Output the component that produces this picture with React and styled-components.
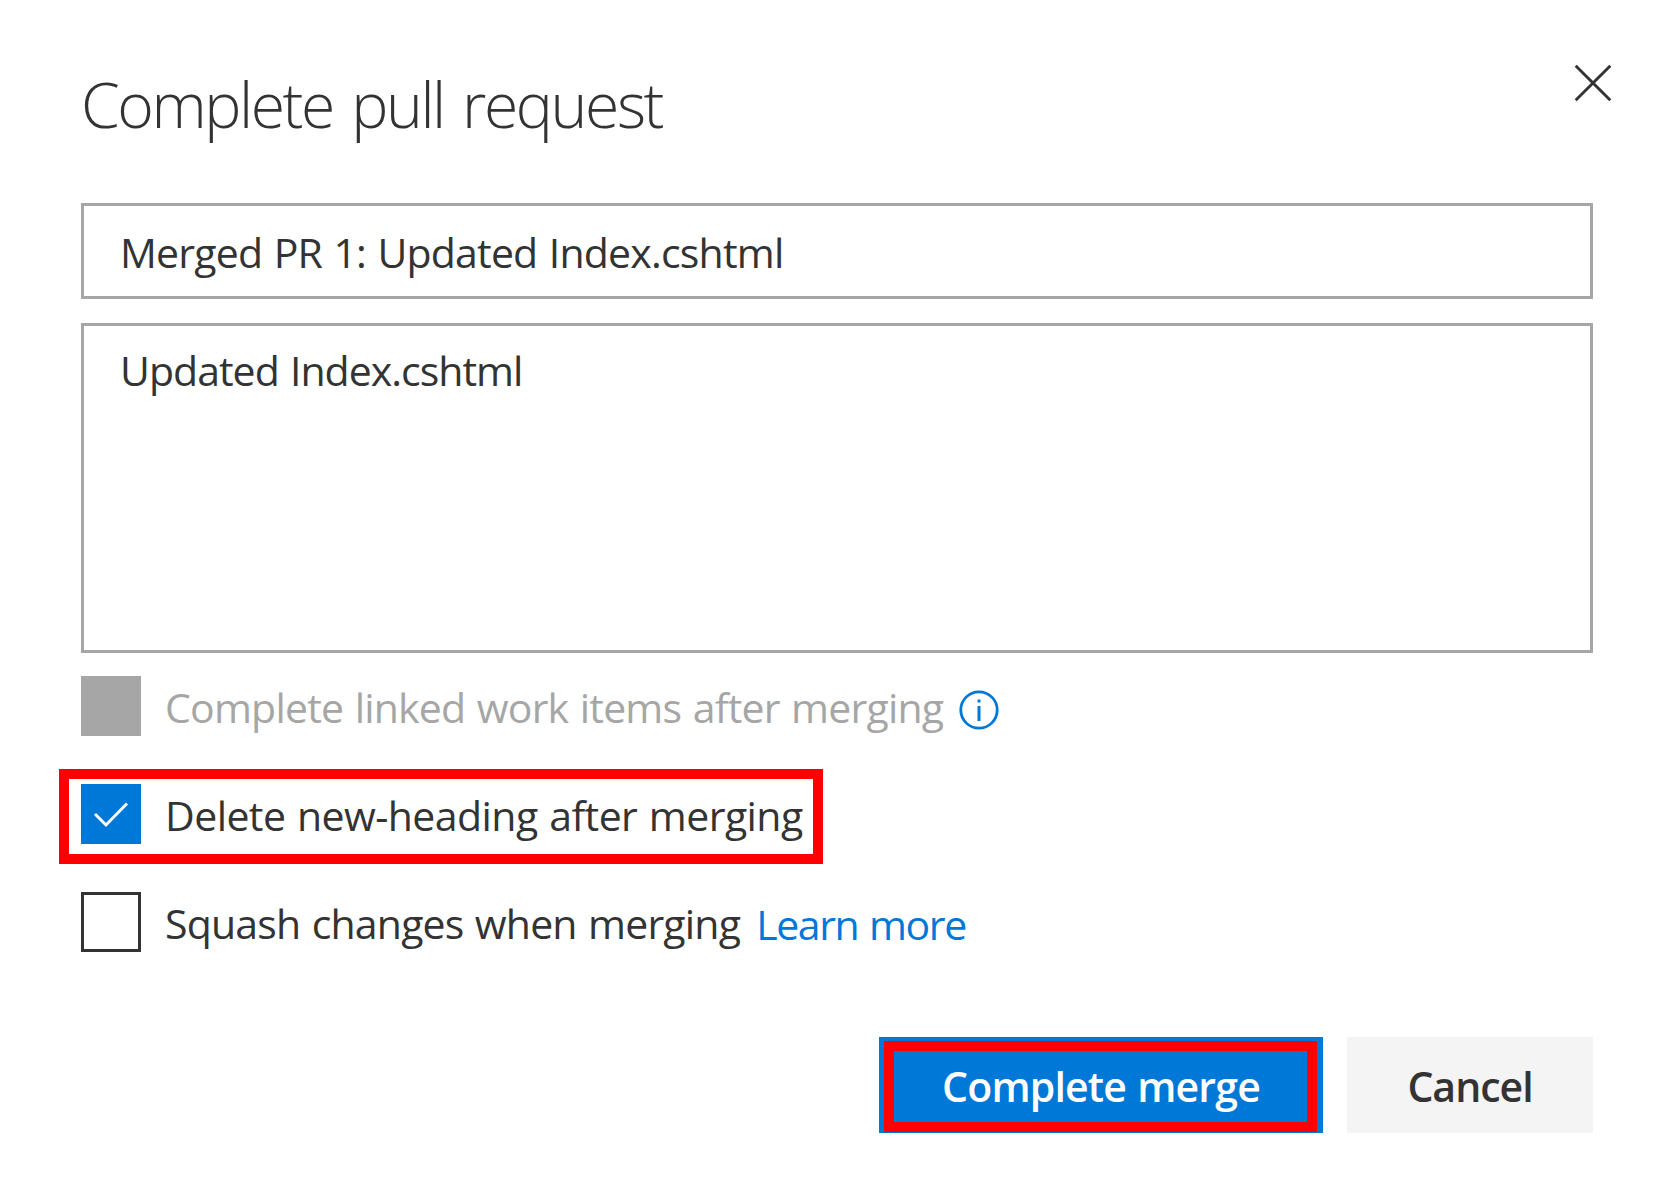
import React from 'react';
import styled, { createGlobalStyle } from 'styled-components';

const GlobalStyle = createGlobalStyle`
  body {
    margin: 0;
    background: #fff;
  }
  *, *::before, *::after {
    box-sizing: border-box;
  }
`;

const Dialog = styled.main`
  display: flex;
  flex-direction: column;
  width: 1675px;
  height: 1191px;
  padding: 63px 82px 0 81px;
  overflow: hidden;
  color: #333;
  background: #fff;
  font-family: "Open Sans", "Noto Sans", sans-serif;
  font-size: 41px;
`;

const Header = styled.header`
  display: flex;
  justify-content: space-between;
  height: 140px;
`;

const Title = styled.h1`
  margin: 0;
  padding-top: 1px;
  font-size: 62.5px;
  font-weight: 300;
  line-height: 80px;
  letter-spacing: -2.45px;
  word-spacing: 4.5px;
  white-space: nowrap;
`;

const CloseButton = styled.button`
  width: 40px;
  height: 40px;
  margin-right: -20px;
  padding: 0;
  border: 0;
  color: #333;
  background: none;

  svg {
    display: block;
  }
`;

const Field = styled.div`
  flex: none;
  height: ${(p) => p.$height}px;
  padding: ${(p) => p.$top}px 36px 0;
  border: 3px solid #a6a6a6;
  line-height: 56px;
  white-space: nowrap;
`;

const Fields = styled.section`
  display: flex;
  flex-direction: column;
  gap: 24px;
`;

const Text = styled.span`
  font-weight: inherit;
  letter-spacing: ${(p) => p.$tracking}px;
  word-spacing: 1.5px;
  white-space: nowrap;
`;

const Options = styled.section`
  display: flex;
  flex-direction: column;
  gap: 48px;
  margin-top: 23px;
`;

const Option = styled.div`
  position: relative;
  display: flex;
  align-items: center;
  height: 60px;
  color: ${(p) => (p.$disabled ? '#a6a6a6' : '#333')};
`;

const boxLooks = {
  disabled: 'background: #a6a6a6;',
  checked: 'background: #0078d7;',
  empty: 'border: 3px solid #333;',
};

const CheckBox = styled.span`
  flex: none;
  width: 60px;
  height: 60px;
  margin-right: 24px;
  ${(p) => boxLooks[p.$state]}

  svg {
    display: block;
  }
`;

const Label = styled.label`
  padding-top: 2px;
  line-height: 56px;
`;

const InfoIcon = styled.svg`
  flex: none;
  width: 40px;
  height: 40px;
  margin: 8px 0 0 16px;
`;

const Link = styled.a`
  margin-left: 16px;
  padding-top: 4px;
  color: #0078d7;
  line-height: 56px;
  text-decoration: none;
`;

const Footer = styled.footer`
  display: flex;
  justify-content: flex-end;
  gap: 24px;
  margin-top: 85px;
`;

const Button = styled.button`
  position: relative;
  width: ${(p) => p.$width}px;
  height: 96px;
  padding: 2px 0 0;
  border: 0;
  color: ${(p) => (p.$primary ? '#fff' : '#333')};
  background: ${(p) => (p.$primary ? '#0078d7' : '#f4f4f4')};
  font: 600 41px/56px "Open Sans", "Noto Sans", sans-serif;
`;

const Highlight = styled.span`
  position: absolute;
  top: ${(p) => p.$top}px;
  left: ${(p) => p.$left}px;
  width: ${(p) => p.$width}px;
  height: ${(p) => p.$height}px;
  border: 10px solid #f00;
  pointer-events: none;
`;

export default function App() {
  return (
    <>
      <GlobalStyle />
      <Dialog>
        <Header>
          <Title>Complete pull request</Title>
          <CloseButton aria-label="Close">
            <svg width="40" height="40" viewBox="0 0 40 40" fill="none" stroke="currentColor" strokeWidth="2.9">
              <path d="M2.7 2.8 37.3 37.2M37.3 2.8 2.7 37.2" />
            </svg>
          </CloseButton>
        </Header>

        <Fields>
          <Field $height={96} $top={18}>
            <Text $tracking={-0.79}>Merged PR 1: Updated Index.cshtml</Text>
          </Field>
          <Field $height={330} $top={16}>
            <Text $tracking={-0.97}>Updated Index.cshtml</Text>
          </Field>
        </Fields>

        <Options>
          <Option $disabled>
            <CheckBox $state="disabled" />
            <Label>
              <Text $tracking={-0.785}>Complete linked work items after merging</Text>
            </Label>
            <InfoIcon viewBox="0 0 40 40" fill="none" stroke="#0078d7">
              <circle cx="20" cy="20" r="18.2" strokeWidth="2.8" />
              <path d="M20 16v15" strokeWidth="3" />
              <path d="M20 9.5v3" strokeWidth="3" />
            </InfoIcon>
          </Option>
          <Option>
            <CheckBox $state="checked">
              <svg width="60" height="60" viewBox="0 0 60 60" fill="none" stroke="#fff" strokeWidth="2.9">
                <path d="M14 30 25 41 46 19.5" />
              </svg>
            </CheckBox>
            <Label>
              <Text $tracking={-0.57}>Delete new-heading after merging</Text>
            </Label>
            <Highlight $top={-15} $left={-22} $width={764} $height={95} />
          </Option>
          <Option>
            <CheckBox $state="empty" />
            <Label>
              <Text $tracking={-0.81}>Squash changes when merging</Text>
            </Label>
            <Link>
              <Text $tracking={-1.4}>Learn more</Text>
            </Link>
          </Option>
        </Options>

        <Footer>
          <Button $primary $width={444}>
            <Text $tracking={-0.83}>Complete merge</Text>
            <Highlight $top={4} $left={5} $width={433} $height={91} />
          </Button>
          <Button $width={246}>
            <Text $tracking={-1}>Cancel</Text>
          </Button>
        </Footer>
      </Dialog>
    </>
  );
}
